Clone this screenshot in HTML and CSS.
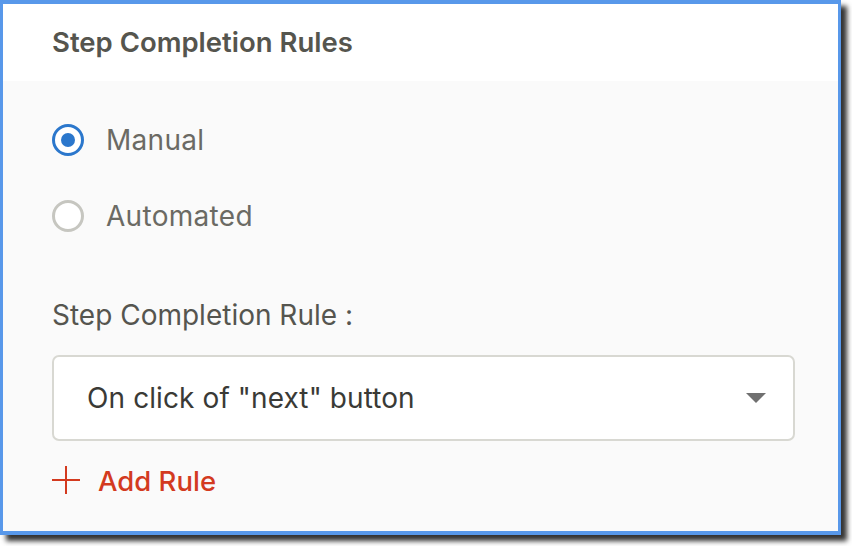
FILE: index.html
```html
<!DOCTYPE html>
<html>
<head>
<meta charset="utf-8">
<link rel="stylesheet" href="styles.css">
</head>
<body>
<div class="page">
<div class="panel">
  <div class="panel-header">Step Completion Rules</div>
  <div class="panel-body">
    <div class="radio-group">
      <label class="radio-row">
        <span class="radio checked"></span>
        <span class="radio-label">Manual</span>
      </label>
      <label class="radio-row">
        <span class="radio"></span>
        <span class="radio-label">Automated</span>
      </label>
    </div>
    <div class="field-label">Step Completion Rule :</div>
    <div class="select">
      <span class="select-value">On click of "next" button</span>
      <span class="caret"></span>
    </div>
    <div class="add-rule">
      <svg class="plus" width="28" height="28" viewBox="0 0 28 28"><path d="M14 0V28M0 14H28" stroke="#d33a1f" stroke-width="2" fill="none"/></svg>
      <span>Add Rule</span>
    </div>
  </div>
</div>
</div>
</body>
</html>
```
FILE: styles.css
```css
html, body {
  margin: 0;
  padding: 0;
  background: #ffffff;
}
body {
  font-family: Inter, "Noto Sans", sans-serif;
}
.page {
  width: 852px;
  height: 546px;
}
.panel {
  width: 841px;
  height: 535px;
  box-sizing: border-box;
  border-style: solid;
  border-color: #5898ea;
  border-width: 4px 3px 4px 3px;
  background: #fafafa;
  box-shadow: 6px 6px 5px rgba(0, 0, 0, 0.8);
  display: flex;
  flex-direction: column;
}
.panel-header {
  height: 75px;
  padding-bottom: 2px;
  background: #ffffff;
  display: flex;
  align-items: center;
  padding-left: 49px;
  font-size: 27.5px;
  font-weight: 600;
  color: #55554e;
  flex-shrink: 0;
}
.panel-body {
  padding: 43px 43px 0 49px;
  display: flex;
  flex-direction: column;
}
.radio-group {
  display: flex;
  flex-direction: column;
  gap: 44px;
}
.radio-row {
  display: flex;
  align-items: center;
  gap: 22px;
  height: 32px;
}
.radio {
  width: 32px;
  height: 32px;
  box-sizing: border-box;
  border-radius: 50%;
  border: 3px solid #c6c6c0;
  background: #ffffff;
  position: relative;
}
.radio.checked {
  border-color: #2b77cc;
}
.radio.checked::after {
  content: "";
  position: absolute;
  left: 6px;
  top: 6px;
  width: 14px;
  height: 14px;
  border-radius: 50%;
  background: #2b77cc;
}
.radio-label {
  font-size: 28px;
  color: #6b6a64;
  letter-spacing: 0.3px;
}
.field-label {
  margin-top: 67px;
  line-height: 32px;
  font-size: 28px;
  color: #55554f;
}
.select {
  margin-top: 24px;
  height: 86px;
  box-sizing: border-box;
  border: 2px solid #d8d8d2;
  border-radius: 7px;
  background: #ffffff;
  display: flex;
  align-items: center;
  justify-content: space-between;
  padding: 0 27px 0 33px;
}
.select-value {
  font-size: 28px;
  color: #3a3a36;
  letter-spacing: 0.1px;
}
.caret {
  width: 0;
  height: 0;
  border-left: 10px solid transparent;
  border-right: 10px solid transparent;
  border-top: 10px solid #707070;
}
.add-rule {
  margin-top: 25px;
  display: flex;
  align-items: center;
  gap: 18px;
  height: 28px;
  font-size: 27.5px;
  font-weight: 500;
  color: #d33a1f;
}
.add-rule span {
  padding-top: 2px;
}
.plus {
  display: block;
}
```
